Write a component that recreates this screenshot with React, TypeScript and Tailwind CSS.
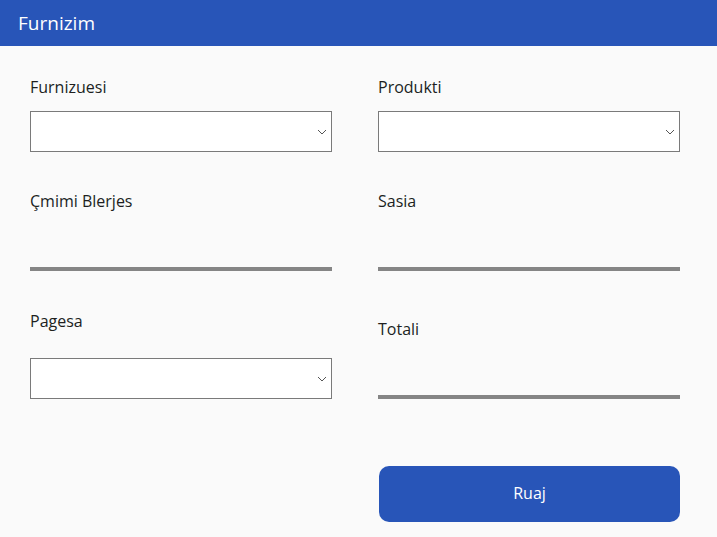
import React from "react";

const Chevron = () => (
  <svg viewBox="0 0 10 6" className="h-[6px] w-[10px]" fill="none" aria-hidden="true">
    <path d="M1 1l4 4 4-4" stroke="#555" strokeWidth="1" />
  </svg>
);

const Label = ({ text }: { text: string }) => (
  <div className="h-[22px] text-[16px] leading-[22px] text-[#201f1e]">{text}</div>
);

const Dropdown = () => (
  <div className="flex h-[41px] w-[302px] items-center justify-end border border-[#7a7a7a] bg-white pr-[4px]">
    <Chevron />
  </div>
);

const Underline = () => <div className="h-[4px] w-[302px] bg-[#858585]" />;

export default function App() {
  return (
    <div className="h-[537px] w-[717px] bg-[#fafafa] font-['Open_Sans',sans-serif]">
      <header className="flex h-[46px] items-center bg-[#2855b8] pl-[18px] text-[19px] text-white">
        Furnizim
      </header>

      <div className="flex gap-[46px] pl-[30px]">
        {/* left */}
        <div className="flex w-[302px] flex-col">
          <div className="mt-[30px]">
            <Label text="Furnizuesi" />
          </div>
          <div className="mt-[13px]">
            <Dropdown />
          </div>
          <div className="mt-[38px]">
            <Label text="Çmimi Blerjes" />
          </div>
          <div className="mt-[55px]">
            <Underline />
          </div>
          <div className="mt-[39px]">
            <Label text="Pagesa" />
          </div>
          <div className="mt-[26px]">
            <Dropdown />
          </div>
        </div>

        {/* right */}
        <div className="flex w-[302px] flex-col">
          <div className="mt-[30px]">
            <Label text="Produkti" />
          </div>
          <div className="mt-[13px]">
            <Dropdown />
          </div>
          <div className="mt-[38px]">
            <Label text="Sasia" />
          </div>
          <div className="mt-[55px]">
            <Underline />
          </div>
          <div className="mt-[47px]">
            <Label text="Totali" />
          </div>
          <div className="mt-[55px]">
            <Underline />
          </div>
          <button
            type="button"
            className="ml-[1px] mt-[67px] h-[56px] w-[301px] rounded-[10px] bg-[#2855b8] pb-[2px] text-[16px] text-white"
          >
            Ruaj
          </button>
        </div>
      </div>
    </div>
  );
}
